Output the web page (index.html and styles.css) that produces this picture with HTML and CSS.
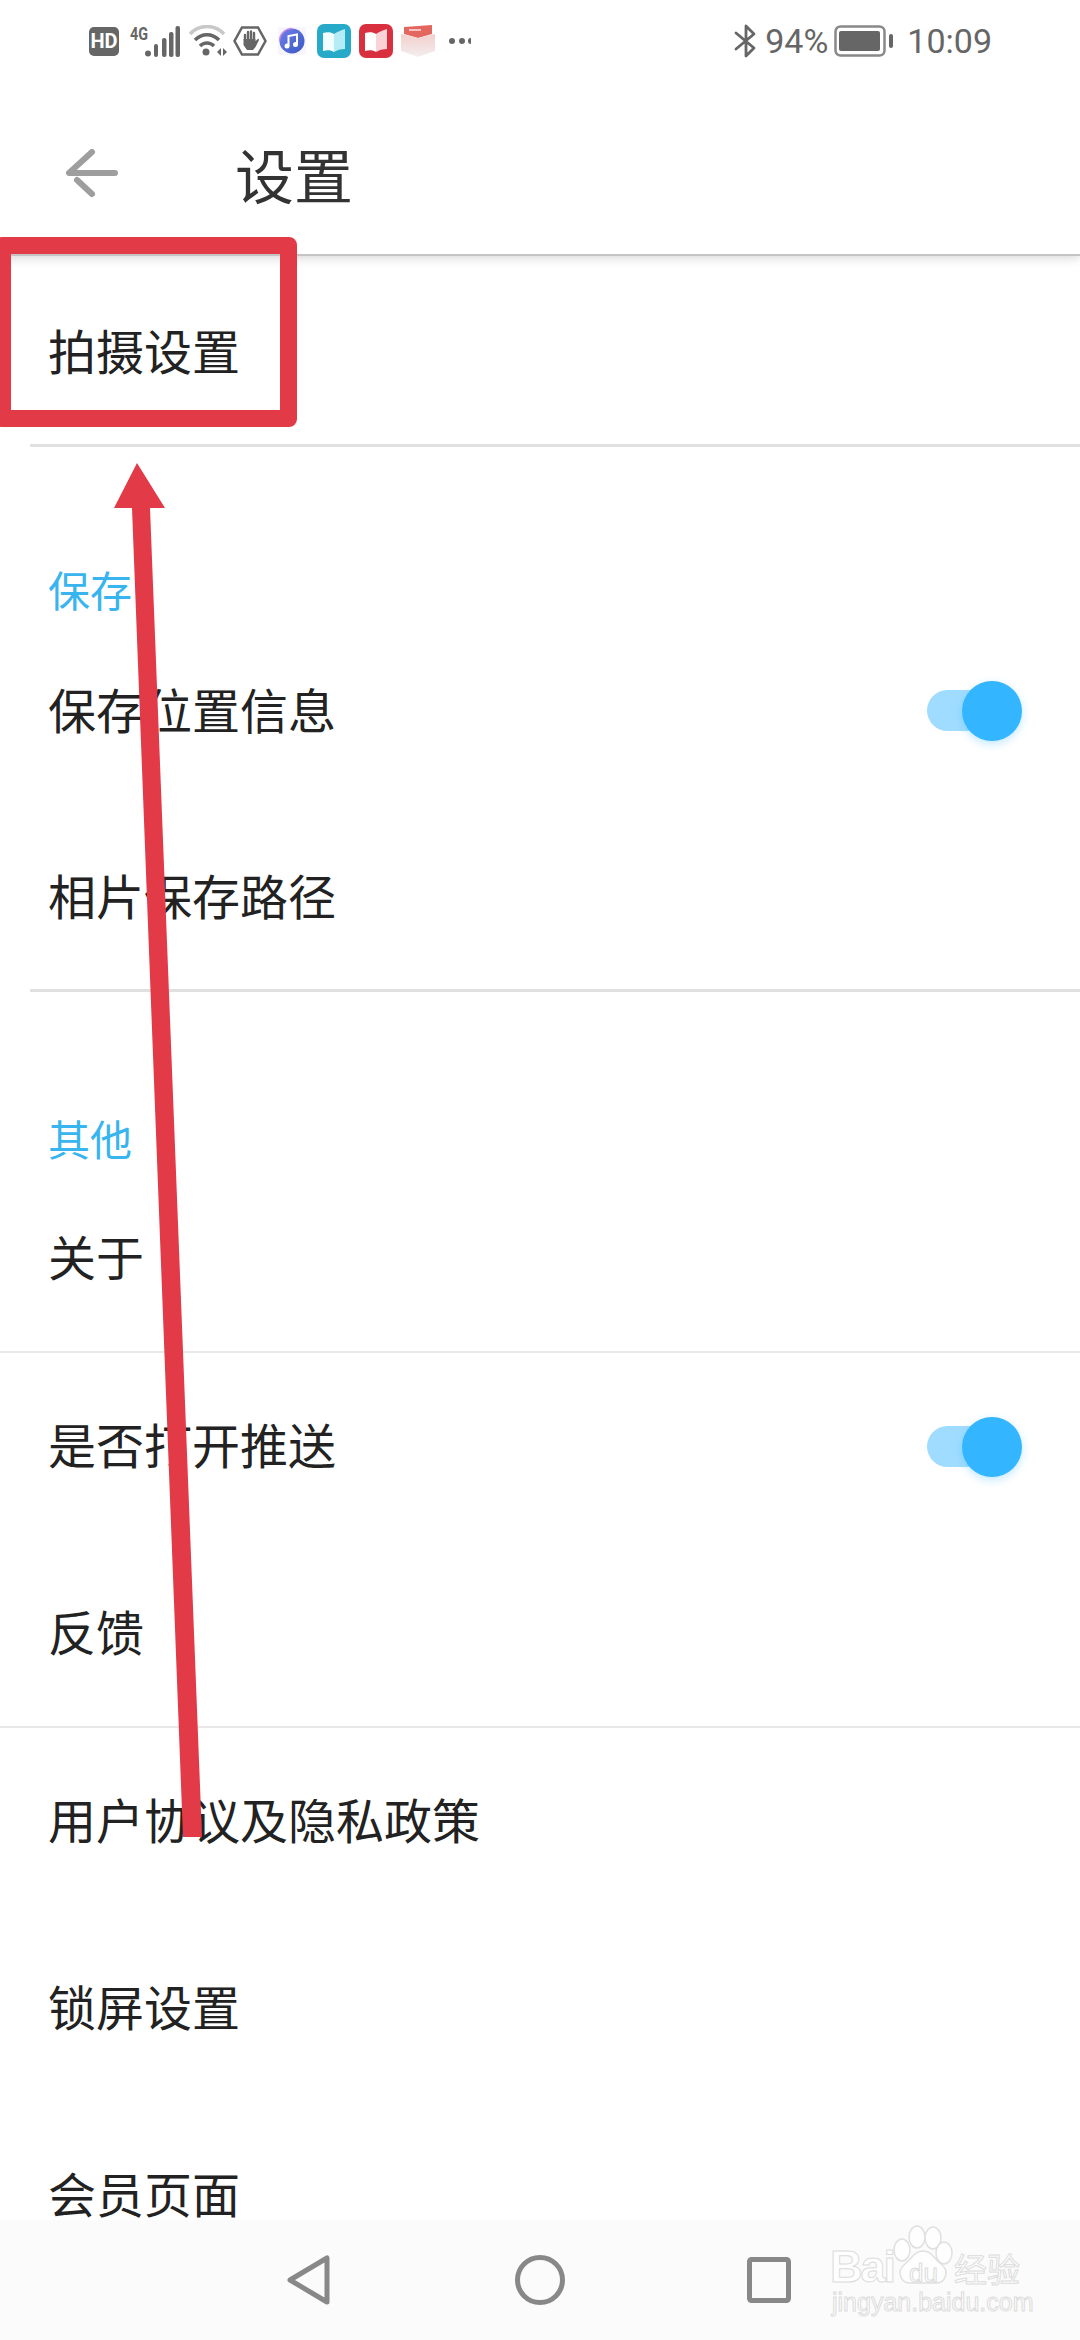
FILE: index.html
```html
<!DOCTYPE html>
<html lang="zh-CN">
<head>
    <meta charset="UTF-8">
    <meta name="viewport" content="width=device-width, initial-scale=1.0">
    <title>设置</title>
    <link rel="stylesheet" href="styles.css">
</head>
<body>
<div class="page">
    <header class="top">
        <div class="status">
            <div class="status-left">
                <span class="hd">HD</span>
                <svg class="ic-signal" width="50" height="34" viewBox="0 0 50 34">
                    <text x="0" y="16" class="net" textLength="18" lengthAdjust="spacingAndGlyphs">4G</text>
                    <circle cx="18" cy="29.500" r="3" fill="#666"/>
                    <rect x="24" y="20" width="4" height="13" rx="2" fill="#666"/>
                    <rect x="32" y="14" width="4.500" height="19" rx="2" fill="#666"/>
                    <rect x="39" y="8" width="4.500" height="25" rx="2" fill="#666"/>
                    <rect x="45.500" y="2" width="4.500" height="31" rx="2" fill="#666"/>
                </svg>
                <svg class="ic-wifi" width="38" height="32" viewBox="0 0 38 32" fill="none">
                    <path d="M1 9C10 -1 26 -1 35 9" stroke="#c8c8c8" stroke-width="3.500"/>
                    <path d="M6 15C13 8 23 8 30 15" stroke="#666" stroke-width="3.500"/>
                    <path d="M11 21C15 17 21 17 25 21" stroke="#666" stroke-width="3.500"/>
                    <circle cx="17" cy="27" r="3.500" fill="#666"/>
                    <path d="M28 27l4-4v8zM34 23l4 4-4 4z" fill="#666"/>
                </svg>
                <svg class="ic-hand" width="34" height="30" viewBox="0 0 34 30" fill="none">
                    <path d="M9 1.500H25L32.500 15L25 28.500H9L1.500 15Z" stroke="#666" stroke-width="2.500"/>
                    <path d="M12 14V9M15 13V6M18 13V5.500M21 13V7" stroke="#666" stroke-width="2.400" stroke-linecap="round"/>
                    <path d="M10.500 13H22.500V15L25.500 12.500L26 14L22.500 21L20 24H14L10.500 19Z" fill="#666"/>
                </svg>
                <svg class="ic-music" width="28" height="28" viewBox="0 0 28 28">
                    <defs>
                        <linearGradient id="musicFill" x1="0" y1="0" x2="1" y2="1">
                            <stop offset="0" stop-color="#6f7fe8"/>
                            <stop offset="1" stop-color="#3a58c4"/>
                        </linearGradient>
                    </defs>
                    <rect width="28" height="28" fill="#f8f6fc"/>
                    <circle cx="14" cy="14" r="12.500" fill="url(#musicFill)"/>
                    <path d="M14 1.500A12.500 12.500 0 0 0 1.500 14" fill="none" stroke="#c58be8" stroke-width="1.500"/>
                    <path d="M10.500 19V9L19 7.500V17" fill="none" stroke="#fff" stroke-width="2"/>
                    <circle cx="9" cy="19" r="2.500" fill="#fff"/>
                    <circle cx="17.500" cy="17.500" r="2.500" fill="#fff"/>
                </svg>
                <svg class="ic-app" width="34" height="34" viewBox="0 0 34 34">
                    <rect width="34" height="34" rx="7" fill="#27a9c8"/>
                    <path d="M6 9C10 8 14 8 17 10V28C14 26 10 26 6 27Z" fill="#f0feff"/>
                    <path d="M17 10C20 8 24 6 28 5V25C24 25 20 26 17 28Z" fill="#b5ecf5"/>
                </svg>
                <svg class="ic-app" width="34" height="34" viewBox="0 0 34 34">
                    <rect width="34" height="34" rx="7" fill="#d9303f"/>
                    <path d="M6 9C10 8 14 8 17 10V28C14 26 10 26 6 27Z" fill="#fff"/>
                    <path d="M17 10C20 8 24 6 28 5V25C24 25 20 26 17 28Z" fill="#fbd3d6"/>
                </svg>
                <svg class="ic-box" width="34" height="32" viewBox="0 0 34 32">
                    <defs>
                        <linearGradient id="boxFill" x1="0" y1="0" x2="0" y2="1">
                            <stop offset="0" stop-color="#f2cfcc"/>
                            <stop offset="1" stop-color="#f4eeee"/>
                        </linearGradient>
                    </defs>
                    <path d="M3 2L31 0V9L17 13L3 9Z" fill="#e4675f"/>
                    <path d="M8 5H20" stroke="#fbe3e0" stroke-width="1.500"/>
                    <path d="M0 9L17 13V32L0 26Z" fill="url(#boxFill)"/>
                    <path d="M34 9L17 13V32L34 26Z" fill="url(#boxFill)"/>
                </svg>
                <svg class="ic-more" width="22" height="6" viewBox="0 0 22 6" fill="#666">
                    <circle cx="3" cy="3" r="3"/>
                    <circle cx="13" cy="3" r="3"/>
                    <circle cx="22" cy="3" r="3"/>
                </svg>
            </div>
            <div class="status-right">
                <svg width="24" height="34" viewBox="0 0 24 34" fill="none" stroke="#666" stroke-width="2.800" stroke-linejoin="round" stroke-linecap="round">
                    <path d="M2 9L20 24L12 32V2L20 10L2 25"/>
                </svg>
                <span class="pct">94%</span>
                <svg width="60" height="32" viewBox="0 0 60 32">
                    <rect x="1.500" y="1.500" width="49" height="29" rx="5" fill="none" stroke="#888" stroke-width="2.500"/>
                    <rect x="5" y="6" width="41" height="20" rx="2" fill="#666"/>
                    <rect x="55" y="9" width="4" height="14" rx="2" fill="#666"/>
                </svg>
                <span class="clock">10:09</span>
            </div>
        </div>
        <div class="titlebar">
            <svg class="back" width="54" height="52" viewBox="0 0 54 52" fill="none" stroke="#9e9e9e" stroke-width="6" stroke-linecap="round" stroke-linejoin="round">
                <path d="M26 3L3 24H49"/>
                <path d="M11 31L26 45"/>
            </svg>
            <h1 class="title">设置</h1>
        </div>
    </header>

    <main class="list">
        <section class="group group-first inset-line">
            <div class="row">拍摄设置</div>
        </section>

        <section class="group inset-line">
            <h2 class="group-name name-save">保存</h2>
            <div class="row">
                保存位置信息
                <span class="toggle"><i class="knob"></i></span>
            </div>
            <div class="row">相片保存路径</div>
        </section>

        <section class="group full-line">
            <h2 class="group-name name-other">其他</h2>
            <div class="row">关于</div>
        </section>
        <section class="group full-line">
            <div class="row">
                是否打开推送
                <span class="toggle"><i class="knob"></i></span>
            </div>
            <div class="row">反馈</div>
        </section>
        <section class="group">
            <div class="row">用户协议及隐私政策</div>
            <div class="row">锁屏设置</div>
            <div class="row">会员页面</div>
        </section>
    </main>

    <nav class="navbar">
        <svg width="44" height="50" viewBox="0 0 44 50" fill="none" stroke="#888" stroke-width="5" stroke-linejoin="round">
            <path d="M40 3V47L3 25Z"/>
        </svg>
        <svg width="50" height="50" viewBox="0 0 50 50" fill="none" stroke="#888" stroke-width="5">
            <circle cx="25" cy="25" r="22.500"/>
        </svg>
        <svg width="44" height="46" viewBox="0 0 44 46" fill="none" stroke="#888" stroke-width="5" stroke-linejoin="round">
            <rect x="2.500" y="2.500" width="39" height="41" rx="2"/>
        </svg>
    </nav>

    <!-- red note drawn over the list -->
    <div class="mark-box"></div>
    <svg class="mark-arrow" width="1080" height="2340" viewBox="0 0 1080 2340">
        <path d="M137 463L165 508H150L202 1837H183L132 508H114Z" fill="#e33a48"/>
    </svg>

    <div class="stamp">
        <svg class="paw" width="66" height="62" viewBox="0 0 66 62" fill="#fefefe" stroke="#e0e0e0" stroke-width="1.500">
            <ellipse cx="12" cy="25" rx="8" ry="11"/>
            <ellipse cx="27" cy="12" rx="8" ry="11"/>
            <ellipse cx="43" cy="13" rx="8" ry="11"/>
            <ellipse cx="54" cy="28" rx="8" ry="11"/>
            <path d="M33 26C24 26 22 34 15 39C6 46 10 59 22 58H44C56 59 60 46 51 39C44 34 42 26 33 26Z"/>
        </svg>
        <div class="stamp-top">
            <span class="stamp-bai">Bai</span>
            <span class="stamp-du">du</span>
            <span class="stamp-cn">经验</span>
        </div>
        <div class="stamp-url">jingyan.baidu.com</div>
    </div>
</div>
</body>
</html>
```

FILE: styles.css
```css
* {
    box-sizing: border-box;
}

body {
    margin: 0;
    background-color: #ffffff;
    font-family: "Noto Sans CJK SC", "Noto Sans", sans-serif;
    color: #222222;
}

.page {
    position: relative;
    width: 1080px;
    height: 2340px;
    overflow: hidden;
    display: flex;
    flex-direction: column;
}

/* status bar and title */
.top {
    flex: none;
    height: 256px;
    background: #ffffff;
    border-bottom: 2px solid #c4c4c4;
    box-shadow: 0 2px 10px rgba(0, 0, 0, 0.16);
    position: relative;
}

.status {
    height: 82px;
    padding: 0 88px 0 89px;
    display: flex;
    justify-content: space-between;
    align-items: center;
    color: #666666;
}

.status-left,
.status-right {
    display: flex;
    align-items: center;
}

.hd {
    width: 30px;
    height: 29px;
    border-radius: 5px;
    background: #666666;
    color: #ffffff;
    font: bold 20px "Roboto", sans-serif;
    display: flex;
    align-items: center;
    justify-content: center;
}

.ic-signal {
    margin-left: 11px;
    overflow: visible;
}

.net {
    font: bold 19px "Roboto", sans-serif;
    fill: #666666;
}

.ic-wifi {
    margin-left: 9px;
}

.ic-hand {
    margin-left: 6px;
}

.ic-music {
    margin-left: 11px;
}

.ic-app {
    margin-left: 8px;
}

.ic-music + .ic-app {
    margin-left: 11px;
}

.ic-box {
    margin-left: 8px;
}

.ic-more {
    margin-left: 14px;
    overflow: hidden;
}

.pct,
.clock {
    font: 34px "Roboto", sans-serif;
}

.pct {
    margin-left: 7px;
}

.status-right svg + .pct {
    margin-right: 6px;
}

.clock {
    margin-left: 13px;
}

.titlebar {
    height: 172px;
    display: flex;
    align-items: center;
    padding-left: 66px;
}

.back {
    margin-top: 14px;
}

.title {
    margin: 10px 0 0 115px;
    font-size: 59px;
    font-weight: 400;
    color: #333333;
    line-height: 1;
}

/* setting rows */
.list {
    flex: 1;
    min-height: 0;
    overflow: hidden;
}

.group-first {
    padding-top: 5px;
}

.inset-line {
    background: linear-gradient(#e0e0e0, #e0e0e0) 30px 100% / 1050px 3px no-repeat;
    padding-bottom: 2px;
}

.full-line {
    border-bottom: 2px solid #e8e8e8;
}

.row {
    height: 186.6px;
    padding: 0 59px 4px 48px;
    display: flex;
    align-items: center;
    justify-content: space-between;
    font-size: 48px;
    line-height: 1.2;
    color: #222222;
}

.group-first .row {
    height: 184px;
    padding-bottom: 6px;
}

.group-name {
    margin: 0;
    padding-left: 48px;
    font-size: 42px;
    font-weight: 400;
    line-height: 50px;
    color: #38b4ee;
}

.name-save {
    padding-top: 117px;
    margin-bottom: 3px;
}

.name-other {
    padding-top: 121px;
    margin-bottom: 1px;
}

.toggle {
    position: relative;
    width: 84px;
    height: 41px;
    margin-top: 4px;
    margin-right: 10px;
    border-radius: 21px;
    background: #a0dcff;
}

.knob {
    position: absolute;
    top: -9px;
    right: -11px;
    width: 60px;
    height: 60px;
    border-radius: 50%;
    background: #33b5ff;
    box-shadow: 0 3px 8px rgba(51, 181, 255, 0.3);
}

/* bottom buttons */
.navbar {
    flex: none;
    height: 120px;
    background: #fbfbfb;
    display: flex;
    align-items: center;
    padding: 0 0 0 287px;
}

.navbar svg:nth-child(2) {
    margin-left: 184px;
}

.navbar svg:nth-child(3) {
    margin-left: 182px;
}

.mark-box {
    position: absolute;
    left: -6px;
    top: 237px;
    width: 303px;
    height: 190px;
    border: 17.5px solid #e33a48;
    border-radius: 8px;
}

.mark-arrow {
    position: absolute;
    left: 0;
    top: 0;
}

/* site stamp in the corner */
.stamp {
    position: absolute;
    left: 830px;
    top: 2225px;
    width: 195px;
    height: 92px;
}

.paw {
    position: absolute;
    left: 60px;
    top: 0;
}

.stamp-top {
    position: absolute;
    left: 0;
    top: 22px;
    height: 40px;
    display: flex;
    align-items: baseline;
    color: #fefefe;
    -webkit-text-stroke: 1px #dcdcdc;
    white-space: nowrap;
    line-height: 40px;
}

.stamp-bai {
    font-family: "Liberation Sans", sans-serif;
    font-weight: bold;
    font-size: 45px;
    letter-spacing: -2px;
}

.stamp-du {
    font-family: "Liberation Sans", sans-serif;
    font-size: 26px;
    margin-left: 15px;
}

.stamp-cn {
    font-family: "Noto Sans CJK SC", sans-serif;
    font-size: 33px;
    margin-left: 16px;
}

.stamp-url {
    position: absolute;
    left: 2px;
    top: 64px;
    font-family: "Liberation Sans", sans-serif;
    font-size: 25px;
    line-height: 26px;
    color: #fefefe;
    -webkit-text-stroke: 1px #dcdcdc;
    white-space: nowrap;
}
```
